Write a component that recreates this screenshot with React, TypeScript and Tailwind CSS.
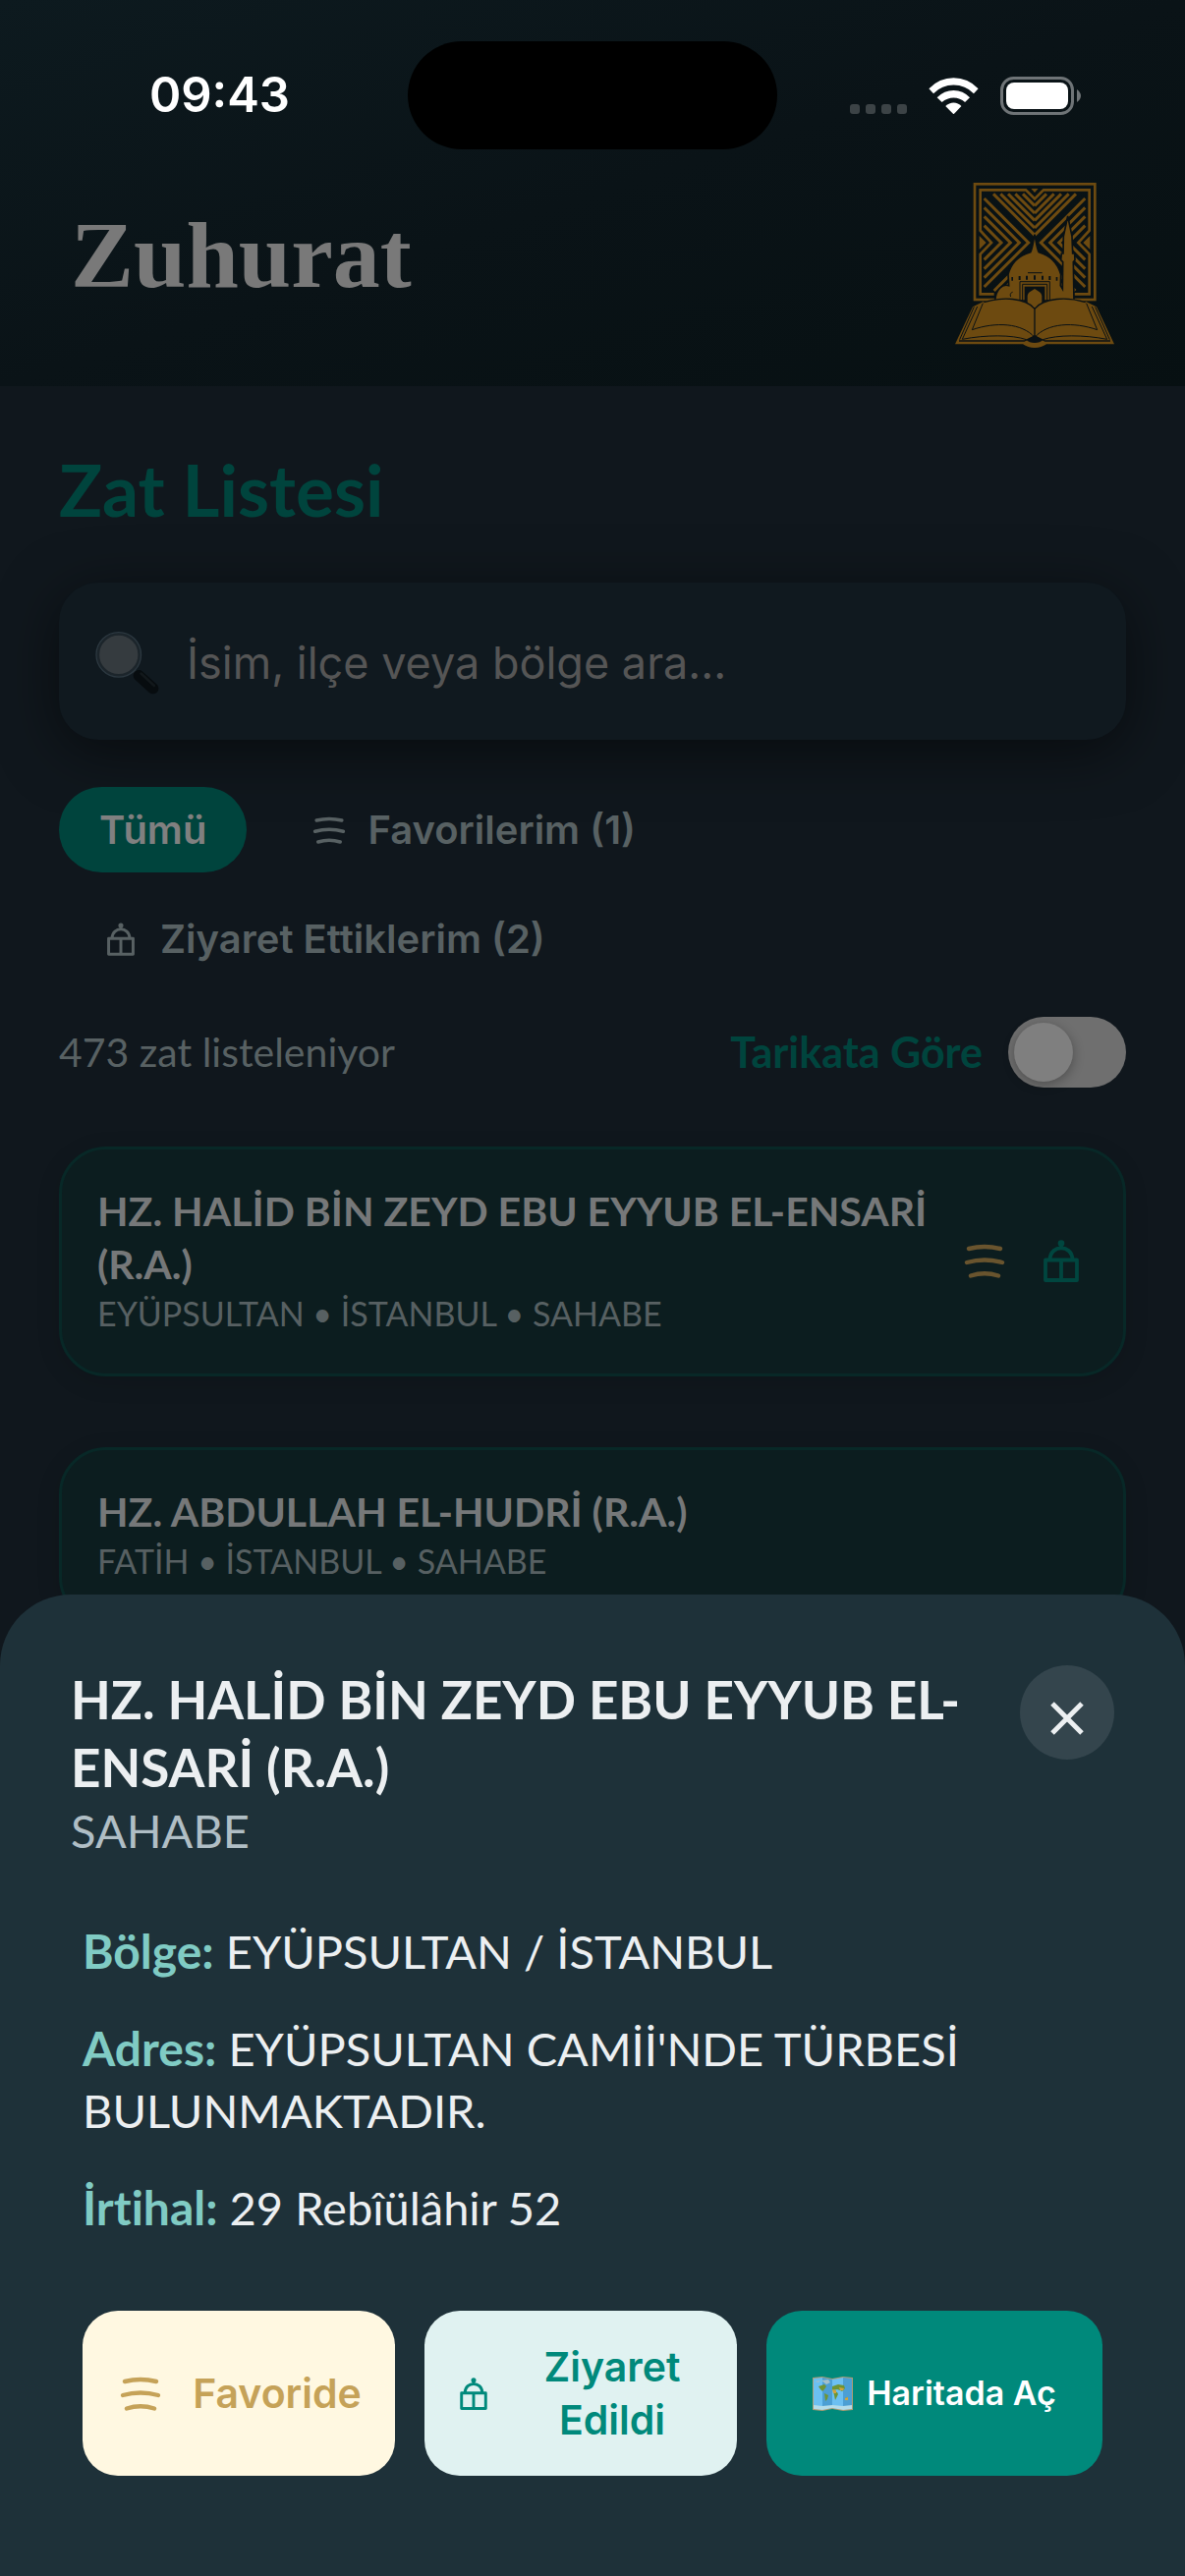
import React from "react";

const sans = "font-['Inter','Liberation_Sans',sans-serif]";
const display = "font-['Lato','Open_Sans',sans-serif] [font-variant-ligatures:none]";

function FavoriteIcon({ className }: { className: string }) {
  return (
    <svg viewBox="0 0 42 35" fill="none" stroke="currentColor" strokeWidth="4.4" strokeLinecap="round" className={className} aria-hidden="true">
      <path d="M5 5Q21 1 37 5" />
      <path d="M3 19Q21 14 39 19" />
      <path d="M7 32.500Q21 28 35 32.500" />
    </svg>
  );
}

function TombIcon({ className }: { className: string }) {
  return (
    <svg viewBox="0 0 36 43" fill="none" stroke="currentColor" strokeWidth="3.800" strokeLinejoin="round" className={className} aria-hidden="true">
      <path d="M2 20.500H34V41H2ZM18 20.500V41M6.500 20C7 4.500 29 4.500 29.500 20M18 4V9" />
      <circle cx="18" cy="3.600" r="3.300" fill="currentColor" stroke="none" />
    </svg>
  );
}

function SearchIcon() {
  return (
    <svg viewBox="36 34 200 200" className="size-[66px] shrink-0" aria-hidden="true">
      <path d="M155 158L168 171" stroke="#1d2429" strokeWidth="14" />
      <path d="M170 172L214 212" stroke="#070c0f" strokeWidth="34" strokeLinecap="round" />
      <path d="M177 166L217 203" stroke="#12181b" strokeWidth="8" strokeLinecap="round" />
      <circle cx="108" cy="108" r="64" fill="#353b3f" stroke="#1c252b" strokeWidth="9" />
      <circle cx="108" cy="108" r="69" fill="none" stroke="#2c3840" strokeWidth="4" />
    </svg>
  );
}

function MapIcon() {
  return (
    <svg viewBox="0 0 41 35" className="h-[35px] w-[41px] shrink-0" aria-hidden="true">
      <path d="M0 1L10 0L20 2L31 0L41 1V34L31 35L20 33L10 35L0 34Z" fill="#b09c74" />
      <path d="M1 2L10 1V33L1 32.500ZM20 3L31 1V33L20 32Z" fill="#6cc0f2" />
      <path d="M10 1L20 3V32L10 33ZM31 1L40 2V32.500L31 33Z" fill="#4c9fd4" />
      <path d="M1 29L10 30L20 29L31 30L40 29V33L31 34L20 32L10 34L1 33Z" fill="#b4dcea" />
      <path d="M9 4L16 3L18 6L14 8ZM2 5L8 4L6 6Z" fill="#a3bfc8" />
      <path d="M6 10L12 8L14 10L12 13L10 15L8 13ZM12 17L16 19L15 23L13 25ZM20 10L26 8L32 9L33 12L30 15L28 14L25 13L20 14ZM21 15L25 16L26 18L23 24L22 19ZM33 22L36 21V24L33 24Z" fill="#6f9433" />
      <path d="M20 13L24 14L24 17L21 17ZM27 11L32 12L31 14L28 14ZM33 22L36 21V24L33 24Z" fill="#d3a43b" />
    </svg>
  );
}

const vertices = [118, 141, 163, 186, 208];
const apexes = [320, 292, 265, 237];

function PatternHalf() {
  return (
    <g fill="none" stroke="#6d4a10" strokeWidth="9">
      {vertices.map((v) => (
        <path key={v} d={`M${421 - v} 82L339 ${v}`} />
      ))}
      {apexes.map((a) => (
        <path key={a} d={`M185 ${416 - a}L${a} 231L185 ${46 + a}`} />
      ))}
      <path d="M339 254L215 378M339 278L240 378" />
    </g>
  );
}

function BookHalf() {
  return (
    <g fill="none" stroke="#0a1114" strokeWidth="3">
      <path d="M181 416L148 497C220 472 300 476 339 520" />
      <path d="M164 426L118 526C190 512 270 512 314 527" />
      <path d="M154 427L110 527" />
      <path d="M108 531H308Q326 522 339 516" strokeWidth="4" />
      <path d="M184 413C240 396 310 398 339 433" strokeWidth="4" />
    </g>
  );
}

function Logo() {
  return (
    <svg viewBox="96 48 486 504" className="h-[168px] w-[162px] shrink-0" role="img" aria-label="Zuhurat logosu">
      <rect x="156" y="52" width="367" height="353" fill="none" stroke="#6d4a10" strokeWidth="8" />
      <path d="M215 388H173V266L207 231L173 194V70H312L339 97L366 70H506V194L472 231L506 266V388H460" fill="none" stroke="#6d4a10" strokeWidth="8" />
      <path d="M328 66H350L339 78ZM170 210L191 231L170 252ZM508 210L487 231L508 252Z" fill="#6d4a10" />
      <PatternHalf />
      <g transform="translate(678 0) scale(-1 1)">
        <PatternHalf />
      </g>
      <path
        d="M218 408C220 374 240 356 260 362L258 328C268 288 298 268 326 260C332 252 334 230 339 206C344 230 346 252 352 260C380 268 408 288 419 328L418 362L424 372L425 290L419 284L421 264H426L427 212L440 150L453 212L455 264H461L462 284L457 290L459 408Z"
        fill="#6d4a10"
        stroke="#0a1114"
        strokeWidth="5"
      />
      <path d="M268 336h5v11h-5zM290 333h6v12h-6zM312 332h6v12h-6zM336 331h6v13h-6zM360 332h6v12h-6zM382 333h6v12h-6zM404 336h5v11h-5z" fill="#0a1114" />
      <path d="M318 323H362M294 410V350H385V410M302 410V358H377V410M266 396C262 388 268 382 272 382" fill="none" stroke="#0a1114" strokeWidth="3" />
      <path d="M308 410V365H370V410Z" fill="#0a1114" />
      <path d="M317 410V394C318 382 330 378 339 372C348 378 360 382 361 394V430H317Z" fill="#6d4a10" />
      <path d="M150 427L96 541H303Q318 552 339 552Q360 552 375 541H582L528 427L497 412C440 396 370 398 339 431C308 398 238 396 181 412Z" fill="#6d4a10" />
      <BookHalf />
      <g transform="translate(678 0) scale(-1 1)">
        <BookHalf />
      </g>
      <path d="M339 431V516" stroke="#0a1114" strokeWidth="4" />
      <path d="M339 514L314 528Q322 537 339 537Q356 537 364 528Z" fill="#0a1114" />
    </svg>
  );
}

function StatusBar() {
  return (
    <div className="flex h-[152px] items-center pt-[42px]">
      <div className="flex flex-1 justify-center pl-8">
        <time className={`${sans} text-[49px] leading-[60px] font-semibold text-white`}>09:43</time>
      </div>
      <div className="h-[110px] w-[376px] rounded-full bg-black" />
      <div className="flex flex-1 items-center justify-center gap-[22px] pr-8">
        <div className="flex gap-[6px] pt-[27px]">
          {[0, 1, 2, 3].map((i) => (
            <span key={i} className="size-[10px] rounded-[3px] bg-[#3c4346]" />
          ))}
        </div>
        <svg viewBox="286 56 152 112" className="h-[37px] w-[51px]" fill="#fff" aria-hidden="true">
          <path d="M286 90Q318 57 362 57Q406 57 438 90L424 105Q398 79 362 79Q326 79 300 105Z" />
          <path d="M311 117Q333 95 362 95Q391 95 412 117L397 132Q382 118 362 118Q342 118 326 132Z" />
          <path d="M337 144Q348 133 362 133Q376 133 386 144L362 169Z" />
        </svg>
        <svg viewBox="0 0 82 39" className="h-[39px] w-[82px]" aria-hidden="true">
          <rect x="1.500" y="1.500" width="72" height="36" rx="12" fill="none" stroke="#6f7477" strokeWidth="3" />
          <rect x="6" y="6" width="63" height="27" rx="8" fill="#fff" />
          <path d="M78 13Q82 16 82 19.500Q82 23 78 26Z" fill="#6f7477" />
        </svg>
      </div>
    </div>
  );
}

type CardProps = { name: string; place: string; marked?: boolean };

function PersonCard({ name, place, marked }: CardProps) {
  return (
    <li className="flex items-center rounded-[48px] border-[3px] border-[#082827] bg-[#0c1d1f] px-9 pt-[36px] pb-[38px] shadow-[0_6px_24px_rgba(0,0,0,0.12)]">
      <div className="flex-1">
        <h2 className={`${display} text-[41px] leading-[54px] font-bold text-[#767879]`}>{name}</h2>
        <p className={`${display} text-[34px] leading-[46px] text-[#576062]`}>{place}</p>
      </div>
      {marked && (
        <div className="flex items-center gap-[39px] pr-[9px]">
          <FavoriteIcon className="h-[35px] w-[42px] text-[#69542e]" />
          <TombIcon className="h-[43px] w-[36px] text-[#00463f]" />
        </div>
      )}
    </li>
  );
}

function Detail({ label, children }: { label: string; children: React.ReactNode }) {
  return (
    <p>
      <strong className="text-[48px] leading-[48px] font-bold text-[#80cbc4]">{label}:</strong> {children}
    </p>
  );
}

export default function App() {
  return (
    <div className="h-screen overflow-hidden bg-[#10171d]">
      <header className="bg-linear-to-br from-[#0d1a1f] via-[#0a1317] to-[#071012]">
        <StatusBar />
        <div className="flex items-center justify-between px-[72px] pt-[34px] pb-[39px]">
          <h1 className="pb-5 font-['Liberation_Serif',serif] text-[96px] leading-[112px] font-bold text-[#797979]">Zuhurat</h1>
          <Logo />
        </div>
      </header>

      <main className="px-[60px] pt-[60px]">
        <h2 className={`${display} text-[73px] leading-[90px] font-bold text-[#00443d]`}>Zat Listesi</h2>

        <label className="mt-[50px] flex h-[160px] items-center gap-[27px] rounded-[40px] bg-[#10191f] px-[37px] pt-1 shadow-[0_12px_60px_rgba(0,0,0,0.5)]">
          <SearchIcon />
          <input
            type="search"
            aria-label="Zat ara"
            placeholder="İsim, ilçe veya bölge ara..."
            className={`${sans} min-w-0 flex-1 bg-transparent text-[45px] leading-[60px] text-[#767879] outline-none placeholder:text-[#555555]`}
          />
        </label>

        <div className={`${sans} mt-12 flex flex-wrap gap-6 text-[40px] leading-[47px] font-semibold text-[#586163]`}>
          <button className="rounded-full bg-[#00443d] px-[41px] py-5 text-[#808080]">Tümü</button>
          <button className="flex items-center gap-[22px] rounded-full px-[43px] py-5">
            <FavoriteIcon className="h-[28px] w-[34px]" />
            Favorilerim (1)
          </button>
          <button className="flex items-center gap-[26px] rounded-full px-[49px] py-5">
            <TombIcon className="h-[34px] w-[28px]" />
            Ziyaret Ettiklerim (2)
          </button>
        </div>

        <div className={`${display} mt-9 flex items-center justify-between text-[41px] leading-[54px] text-[#586163]`}>
          <p>473 zat listeleniyor</p>
          <label className="flex items-center gap-[26px] text-[43px] font-bold text-[#00443d]">
            Tarikata Göre
            <input
              type="checkbox"
              role="switch"
              className="h-[72px] w-[120px] appearance-none rounded-full bg-[#6f6f6f] p-[6px] before:block before:size-[60px] before:rounded-full before:bg-[#7f7f7f] before:shadow-[0_3px_12px_rgba(0,0,0,0.3)] checked:before:translate-x-12"
            />
          </label>
        </div>

        <ul className="mt-[60px] flex flex-col gap-[72px]">
          <PersonCard name="HZ. HALİD BİN ZEYD EBU EYYUB EL-ENSARİ (R.A.)" place="EYÜPSULTAN • İSTANBUL • SAHABE" marked />
          <PersonCard name="HZ. ABDULLAH EL-HUDRİ (R.A.)" place="FATİH • İSTANBUL • SAHABE" />
        </ul>
      </main>

      <section role="dialog" aria-labelledby="person-name" className="fixed inset-x-0 bottom-0 rounded-t-[72px] bg-[#1e3139] px-[72px] pt-[72px] pb-[102px]">
        <div className="flex items-start justify-between gap-12">
          <div className="flex-1">
            <h2 id="person-name" className={`${display} text-[53px] leading-[69px] font-bold text-[#eceff1]`}>
              HZ. HALİD BİN ZEYD EBU EYYUB EL-ENSARİ (R.A.)
            </h2>
            <p className={`${display} text-[47px] leading-[60px] text-[#b0bec5]`}>SAHABE</p>
          </div>
          <button aria-label="Kapat" className="flex size-24 items-center justify-center rounded-full bg-[#34454d] pt-3 text-[#eceff1]">
            <svg viewBox="0 0 34 34" className="size-[34px]" stroke="currentColor" strokeWidth="5" aria-hidden="true">
              <path d="M2 2L32 32M32 2L2 32" />
            </svg>
          </button>
        </div>

        <div className={`${display} mt-[62px] flex flex-col gap-9 px-3 text-[47px] leading-[63px] text-[#eceff1]`}>
          <Detail label="Bölge">EYÜPSULTAN / İSTANBUL</Detail>
          <Detail label="Adres">EYÜPSULTAN CAMİİ'NDE TÜRBESİ BULUNMAKTADIR.</Detail>
          <Detail label="İrtihal">29 Rebîülâhir 52</Detail>
        </div>

        <div className={`${sans} mt-[73px] grid h-[168px] grid-cols-[318fr_318fr_342fr] gap-[30px] px-3 text-[41px] leading-[54px] font-semibold`}>
          <button className="flex items-center justify-center gap-8 rounded-[36px] bg-[#fff8e1] pl-1 text-[#c5a258]">
            <FavoriteIcon className="h-[35px] w-[42px]" />
            Favoride
          </button>
          <button className="flex items-center gap-9 rounded-[36px] bg-[#e0f2f1] px-9 text-[#00897b]">
            <TombIcon className="h-[33px] w-[28px] shrink-0" />
            <span className="flex-1">Ziyaret Edildi</span>
          </button>
          <button className="flex items-center justify-center gap-[14px] rounded-[36px] bg-[#00897b] text-[34px] leading-[42px] text-white">
            <MapIcon />
            Haritada Aç
          </button>
        </div>
      </section>
    </div>
  );
}
